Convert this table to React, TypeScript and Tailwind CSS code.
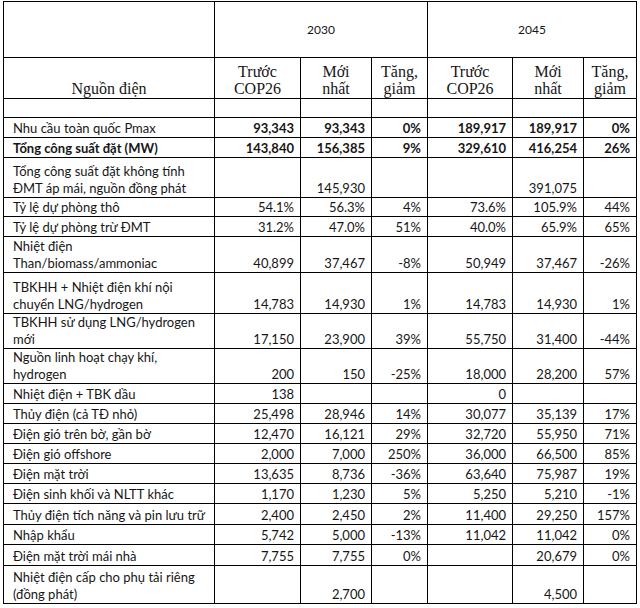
import React from 'react';

type Row = {
  h: number;
  label: string[];
  vals: string[];
  bold?: 'all' | 'nums';
};

const rows: Row[] = [
  { h: 19, label: [], vals: ['', '', '', '', '', ''] },
  { h: 20, label: ['Nhu cầu toàn quốc Pmax'], vals: ['93,343', '93,343', '0%', '189,917', '189,917', '0%'], bold: 'nums' },
  { h: 20, label: ['Tổng công suất đặt (MW)'], vals: ['143,840', '156,385', '9%', '329,610', '416,254', '26%'], bold: 'all' },
  { h: 40, label: ['Tổng công suất đặt không tính', 'ĐMT áp mái, nguồn đồng phát'], vals: ['', '145,930', '', '', '391,075', ''] },
  { h: 19, label: ['Tỷ lệ dự phòng thô'], vals: ['54.1%', '56.3%', '4%', '73.6%', '105.9%', '44%'] },
  { h: 20, label: ['Tỷ lệ dự phòng trừ ĐMT'], vals: ['31.2%', '47.0%', '51%', '40.0%', '65.9%', '65%'] },
  { h: 36, label: ['Nhiệt điện', 'Than/biomass/ammoniac'], vals: ['40,899', '37,467', '-8%', '50,949', '37,467', '-26%'] },
  { h: 41, label: ['TBKHH + Nhiệt điện khí nội', 'chuyển LNG/hydrogen'], vals: ['14,783', '14,930', '1%', '14,783', '14,930', '1%'] },
  { h: 35, label: ['TBKHH sử dụng LNG/hydrogen', 'mới'], vals: ['17,150', '23,900', '39%', '55,750', '31,400', '-44%'] },
  { h: 35, label: ['Nguồn linh hoạt chạy khí,', 'hydrogen'], vals: ['200', '150', '-25%', '18,000', '28,200', '57%'] },
  { h: 20, label: ['Nhiệt điện + TBK dầu'], vals: ['138', '', '', '0', '', ''] },
  { h: 20, label: ['Thủy điện (cả TĐ nhỏ)'], vals: ['25,498', '28,946', '14%', '30,077', '35,139', '17%'] },
  { h: 20, label: ['Điện gió trên bờ, gần bờ'], vals: ['12,470', '16,121', '29%', '32,720', '55,950', '71%'] },
  { h: 20, label: ['Điện gió offshore'], vals: ['2,000', '7,000', '250%', '36,000', '66,500', '85%'] },
  { h: 20, label: ['Điện mặt trời'], vals: ['13,635', '8,736', '-36%', '63,640', '75,987', '19%'] },
  { h: 20, label: ['Điện sinh khối và NLTT khác'], vals: ['1,170', '1,230', '5%', '5,250', '5,210', '-1%'] },
  { h: 21, label: ['Thủy điện tích năng và pin lưu trữ'], vals: ['2,400', '2,450', '2%', '11,400', '29,250', '157%'] },
  { h: 20, label: ['Nhập khẩu'], vals: ['5,742', '5,000', '-13%', '11,042', '11,042', '0%'] },
  { h: 21, label: ['Điện mặt trời mái nhà'], vals: ['7,755', '7,755', '0%', '', '20,679', '0%'] },
  { h: 38, label: ['Nhiệt điện cấp cho phụ tải riêng', '(đồng phát)'], vals: ['', '2,700', '', '', '4,500', ''] },
];

const cell = 'border border-black p-0 overflow-hidden';
const serifHead = "font-['Liberation_Serif',serif] text-[16px] leading-[17px] text-center align-bottom pb-px";

const App: React.FC = () => {
  return (
    <div className="min-h-screen bg-white pl-[3px] pt-px font-['Lato',sans-serif] text-[#161616]">
      <table className="w-[633px] table-fixed border-collapse">
        <colgroup>
          <col className="w-[211px]" />
          <col className="w-[86px]" />
          <col className="w-[71px]" />
          <col className="w-[56px]" />
          <col className="w-[85px]" />
          <col className="w-[71px]" />
          <col className="w-[53px]" />
        </colgroup>
        <tbody>
          <tr className="h-[56px]">
            <td className={cell} />
            <td colSpan={3} className={`${cell} text-center align-middle text-[12px]`}>2030</td>
            <td colSpan={3} className={`${cell} text-center align-middle text-[12px]`}>2045</td>
          </tr>
          <tr className="h-[41px]">
            <td className={`${cell} ${serifHead}`}>Nguồn điện</td>
            <td className={`${cell} ${serifHead}`}>Trước<br />COP26</td>
            <td className={`${cell} ${serifHead}`}>Mới<br />nhất</td>
            <td className={`${cell} ${serifHead}`}>Tăng,<br />giảm</td>
            <td className={`${cell} ${serifHead}`}>Trước<br />COP26</td>
            <td className={`${cell} ${serifHead}`}>Mới<br />nhất</td>
            <td className={`${cell} ${serifHead}`}>Tăng,<br />giảm</td>
          </tr>
          {rows.map((r, i) => (
            <tr key={i} style={{ height: r.h }}>
              <td
                className={`${cell} align-bottom pl-[9px] text-[13px] leading-[17px] whitespace-nowrap ${
                  r.bold === 'all' ? 'font-bold' : ''
                }`}
              >
                {r.label.map((l, j) => (
                  <div key={j}>{l}</div>
                ))}
              </td>
              {r.vals.map((v, j) => (
                <td
                  key={j}
                  className={`${cell} align-bottom text-right pr-[6px] text-[13px] leading-[17px] ${
                    r.bold ? 'font-bold' : ''
                  }`}
                >
                  {v}
                </td>
              ))}
            </tr>
          ))}
        </tbody>
      </table>
    </div>
  );
};

export default App;
